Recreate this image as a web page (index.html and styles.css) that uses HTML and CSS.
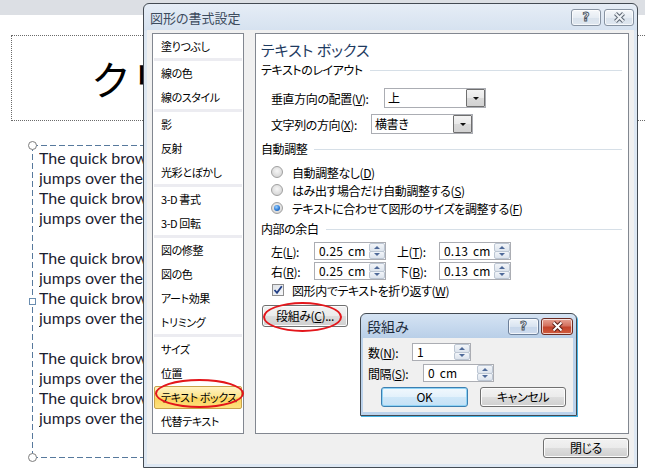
FILE: index.html
```html
<!DOCTYPE html>
<html lang="ja">
<head>
<meta charset="utf-8">
<title>図形の書式設定</title>
<link rel="stylesheet" href="styles.css">
</head>
<body>
<div class="screen">
  <div class="top-band"></div>

  <div class="title-ph"><div class="ph-clip">クリ</div></div>

  <div class="textbox">
    <span class="handle h-tl"></span>
    <span class="handle h-bl"></span>
    <span class="handle-sq"></span>
    <div class="tb-text">
      <p>The quick brown<br>jumps over the<br>The quick brown<br>jumps over the</p>
      <p>The quick brown<br>jumps over the<br>The quick brown<br>jumps over the</p>
      <p>The quick brown<br>jumps over the<br>The quick brown<br>jumps over the</p>
    </div>
  </div>

  <div class="dialog main-dlg">
    <div class="titlebar">
      <span class="title">図形の書式設定</span>
      <span class="cbtn help">?</span>
      <span class="cbtn close">
        <svg width="13" height="11" viewBox="0 0 13 11"><path d="M2.5 1.5 L10.5 9.5 M10.5 1.5 L2.5 9.5" stroke="#5d6773" stroke-width="4"/><path d="M2.5 1.5 L10.5 9.5 M10.5 1.5 L2.5 9.5" stroke="#eef2f6" stroke-width="2"/></svg>
      </span>
    </div>
    <div class="client">
      <div class="main-row">
        <ul class="cat-list">
          <li>塗りつぶし</li>
          <li class="sep"></li>
          <li>線の色</li>
          <li>線のスタイル</li>
          <li class="sep"></li>
          <li>影</li>
          <li>反射</li>
          <li>光彩とぼかし</li>
          <li class="sep"></li>
          <li>3-D 書式</li>
          <li>3-D 回転</li>
          <li class="sep"></li>
          <li>図の修整</li>
          <li>図の色</li>
          <li>アート効果</li>
          <li>トリミング</li>
          <li class="sep"></li>
          <li>サイズ</li>
          <li>位置</li>
          <li class="selected"><span>テキスト ボックス</span></li>
          <li>代替テキスト</li>
        </ul>
        <div class="panel">
          <h2 class="panel-title">テキスト ボックス</h2>
          <div class="section"><span>テキストのレイアウト</span></div>
          <div class="field r-valign">
            <span class="lbl w113">垂直方向の配置(<u>V</u>):</span>
            <div class="combo"><span class="combo-text">上</span><span class="combo-btn"></span></div>
          </div>
          <div class="field r-dir">
            <span class="lbl w100">文字列の方向(<u>X</u>):</span>
            <div class="combo"><span class="combo-text">横書き</span><span class="combo-btn"></span></div>
          </div>
          <div class="section s-auto"><span>自動調整</span></div>
          <div class="radios">
            <div class="opt"><span class="radio"></span>自動調整なし(<u>D</u>)</div>
            <div class="opt"><span class="radio"></span>はみ出す場合だけ自動調整する(<u>S</u>)</div>
            <div class="opt"><span class="radio on"></span>テキストに合わせて図形のサイズを調整する(<u>F</u>)</div>
          </div>
          <div class="section s-margin"><span>内部の余白</span></div>
          <div class="spin-row r-first">
            <span class="lbl w43">左(<u>L</u>):</span>
            <div class="spin w72"><span class="spin-val">0.25 cm</span><span class="spin-btns"><i class="up"></i><i class="dn"></i></span></div>
            <span class="lbl w42 col2">上(<u>T</u>):</span>
            <div class="spin w72"><span class="spin-val">0.13 cm</span><span class="spin-btns"><i class="up"></i><i class="dn"></i></span></div>
          </div>
          <div class="spin-row r-second">
            <span class="lbl w43">右(<u>R</u>):</span>
            <div class="spin w72"><span class="spin-val">0.25 cm</span><span class="spin-btns"><i class="up"></i><i class="dn"></i></span></div>
            <span class="lbl w42 col2">下(<u>B</u>):</span>
            <div class="spin w72"><span class="spin-val">0.13 cm</span><span class="spin-btns"><i class="up"></i><i class="dn"></i></span></div>
          </div>
          <div class="opt check-row">
            <span class="check"><svg width="10" height="10" viewBox="0 0 10 10"><path d="M1.5 5 L4 7.8 L8.8 1.2" fill="none" stroke="#223f86" stroke-width="1.8"/></svg></span>図形内でテキストを折り返す(<u>W</u>)
          </div>
          <button class="btn cols-btn">段組み(<u>C</u>)...</button>
        </div>
      </div>
      <div class="footer">
        <button class="btn close-btn">閉じる</button>
      </div>
    </div>
  </div>

  <div class="dialog sub-dlg">
    <div class="titlebar">
      <span class="title">段組み</span>
      <span class="cbtn help">?</span>
      <span class="cbtn close red">
        <svg width="13" height="11" viewBox="0 0 13 11"><path d="M2.5 1.5 L10.5 9.5 M10.5 1.5 L2.5 9.5" stroke="#5b2019" stroke-width="4"/><path d="M2.5 1.5 L10.5 9.5 M10.5 1.5 L2.5 9.5" stroke="#ffffff" stroke-width="2"/></svg>
      </span>
    </div>
    <div class="client sub-client">
      <div class="spin-row">
        <span class="lbl w44">数(<u>N</u>):</span>
        <div class="spin w59"><span class="spin-val">1</span><span class="spin-btns"><i class="up"></i><i class="dn"></i></span></div>
      </div>
      <div class="spin-row r-gap">
        <span class="lbl w55">間隔(<u>S</u>):</span>
        <div class="spin w71"><span class="spin-val">0 cm</span><span class="spin-btns"><i class="up"></i><i class="dn"></i></span></div>
      </div>
      <div class="btn-row">
        <button class="btn default ok-btn">OK</button>
        <button class="btn cancel-btn">キャンセル</button>
      </div>
    </div>
  </div>

  <div class="ring ring-list"></div>
  <div class="ring ring-btn"></div>
</div>
</body>
</html>
```

FILE: styles.css
```css
* { box-sizing: border-box; margin: 0; padding: 0; }

html, body { width: 645px; height: 475px; overflow: hidden; }

body {
  background: #ffffff;
  font-family: "Noto Sans CJK JP", "Noto Sans", sans-serif;
  font-size: 12px;
  color: #000;
  font-feature-settings: "palt";
  letter-spacing: -0.4px;
}

.screen { position: relative; width: 645px; height: 475px; overflow: hidden; background: #fff; }

.top-band { height: 15px; background: #dcdfe4; }

/* slide shapes */
.title-ph {
  position: absolute; left: 11px; top: 35px; width: 640px; height: 86px;
  border: 1px dotted #6a6a6a;
  display: flex; align-items: center;
  padding-left: 79px;
}
.ph-clip {
  width: 53px; overflow: hidden; white-space: nowrap;
  font-size: 40px; line-height: 1.2; color: #000;
  font-feature-settings: normal; letter-spacing: 0;
}

.textbox {
  position: absolute; left: 32px; top: 145px; width: 300px; height: 313px;
  background:
    repeating-linear-gradient(90deg, #57799d 0 6px, transparent 6px 9px) left top / 100% 1px no-repeat,
    repeating-linear-gradient(90deg, #57799d 0 6px, transparent 6px 9px) left bottom / 100% 1px no-repeat,
    repeating-linear-gradient(180deg, #57799d 0 6px, transparent 6px 9px) left top / 1px 100% no-repeat;
  padding: 3px 0 0 7px;
}
.tb-text {
  width: 104px; overflow: hidden;
  font-family: Lato, "Open Sans", sans-serif;
  font-size: 16px; line-height: 20px; color: #1c2130; white-space: nowrap;
  font-feature-settings: normal; letter-spacing: 0;
}
.tb-text p + p { margin-top: 20px; }
.handle {
  position: absolute; left: -4px; width: 9px; height: 9px; border-radius: 50%;
  border: 1px solid #7d7d7d; background: #fff;
}
.h-tl { top: -4px; }
.h-bl { top: 308px; }
.handle-sq {
  position: absolute; left: -3px; top: 153px; width: 7px; height: 7px;
  border: 1px solid #6a8db0; background: #fff;
}

/* dialogs */
.dialog {
  position: absolute;
  border: 1px solid #434a52;
  border-radius: 6px 6px 0 0;
  display: flex; flex-direction: column;
}
.main-dlg {
  left: 143px; top: 3px; width: 495px; height: 465px;
  background: linear-gradient(#e6edf6, #d6e2f0 26px, #dde7f2 27px);
}
.sub-dlg {
  left: 360px; top: 313px; width: 217px; height: 103px;
  background: linear-gradient(#d5e3f3, #b9cfe8 24px, #bcd3ec 25px);
  box-shadow: 1px 1px 0 #47b5e6;
}

.titlebar { height: 26px; flex: none; display: flex; align-items: center; padding: 0 3px 0 6px; gap: 3px; }
.sub-dlg .titlebar { height: 24px; padding: 0 3px 0 6px; gap: 2px; }
.title { flex: 1; font-size: 13px; line-height: 17px; color: #3d4c5e; letter-spacing: 0; }
.sub-dlg .title { color: #1d2a3a; font-size: 14px; }

.cbtn {
  width: 30px; height: 17px; flex: none;
  border: 1px solid #8793a2; border-radius: 3px;
  background: linear-gradient(#f5f7fa, #e6ecf3 50%, #d9e2ec 51%, #dfe7f0);
  box-shadow: inset 0 0 0 1px rgba(255,255,255,0.7);
  display: flex; align-items: center; justify-content: center;
}
.help {
  font-family: "DejaVu Sans", sans-serif; font-weight: bold; font-size: 12px; line-height: 1;
  color: #f3f5f8; -webkit-text-stroke: 0.9px #4a5562; letter-spacing: 0;
}
.sub-dlg .cbtn { width: 31px; }
.sub-dlg .help { border-color: #6c7f99; background: linear-gradient(#eef3f9, #d9e4f1 50%, #c6d6ea 51%, #cfdcee); }
.close.red {
  width: 32px;
  border-color: #6c2b22;
  background: linear-gradient(#e7a395, #d4715f 45%, #c2432c 55%, #d15c3f);
}

.client {
  flex: 1;
  margin: 0 3px 3px 3px;
  background: #f0f0f0;
  padding: 3px 4px 6px 5px;
  display: flex; flex-direction: column;
}

.main-row { display: flex; gap: 11px; height: 401px; }

.cat-list {
  list-style: none; width: 92px; flex: none;
  border: 1px solid #828790; background: #fff;
  font-size: 11px; letter-spacing: -0.4px;
}
.cat-list li { height: 24px; line-height: 24px; padding-left: 8px; white-space: nowrap; }
.cat-list li.sep { height: 3px; margin: 0 1px; background: #ececf1; }
.cat-list li.selected { padding: 1px 1px 0 1px; }
.cat-list li.selected span {
  display: block; height: 23px; line-height: 21px; padding-left: 6px;
  border: 1px solid #c9a24a; border-radius: 2px;
  background: linear-gradient(#fff3c3, #fde58f 45%, #fcd35f 55%, #fde27e);
}

.panel {
  width: 374px; flex: none;
  border: 1px solid #828790; background: #fff;
  padding: 4px 6px 0 5px;
  display: flex; flex-direction: column;
}
.panel-title {
  font-weight: normal; font-size: 15px; line-height: 24px; height: 24px; color: #1e3a5f; letter-spacing: 0;
}
.section { display: flex; align-items: center; height: 16px; line-height: 16px; gap: 7px; }
.section::after { content: ""; flex: 1; height: 1px; background: #d6dfe7; }
.s-auto { margin-top: 7px; }
.s-margin { margin-top: 4px; }

.field { display: flex; align-items: center; height: 20px; padding-left: 10px; }
.r-valign { margin-top: 10px; }
.r-dir { margin-top: 6px; }
.lbl { flex: none; white-space: nowrap; }
.w113 { width: 113px; }
.w100 { width: 100px; }
.w43 { width: 43px; }
.w42 { width: 42px; }
.w44 { width: 44px; }
.w55 { width: 55px; }
.col2 { margin-left: 11px; }

.combo {
  width: 102px; height: 20px; display: flex;
  border: 1px solid #abadb3; background: #fff;
}
.combo-text { flex: 1; padding-left: 3px; line-height: 18px; }
.combo-btn {
  width: 19px; flex: none;
  border: 1px solid #6f6f6f; border-radius: 1px;
  background: linear-gradient(#f4f4f4, #e9e9e9 50%, #dadada 51%, #d2d2d2);
  display: flex; align-items: center; justify-content: center;
}
.combo-btn::after {
  content: ""; border-left: 3px solid transparent; border-right: 3px solid transparent; border-top: 3px solid #111;
}

.radios { margin-top: 6px; }
.opt { display: flex; align-items: center; height: 18px; padding-left: 10px; white-space: nowrap; }
.radio {
  width: 12px; height: 12px; border-radius: 50%; flex: none; margin-right: 9px;
  border: 1px solid #a0a0a0;
  background: radial-gradient(circle at 50% 40%, #f6f6f6, #d9d9d9 70%, #cfcfcf);
  display: flex; align-items: center; justify-content: center;
}
.radio.on::after {
  content: ""; width: 6px; height: 6px; border-radius: 50%;
  background: radial-gradient(circle at 40% 35%, #9fd4ff, #2c7ad6 55%, #134e9c);
}

.spin-row { display: flex; align-items: center; height: 18px; padding-left: 10px; }
.r-first { margin-top: 5px; }
.r-second { margin-top: 2px; }
.spin {
  height: 18px; display: flex; flex: none;
  border: 1px solid #abadb3; background: #fff;
}
.w72 { width: 72px; }
.w59 { width: 59px; }
.w71 { width: 71px; }
.spin-val { flex: 1; padding-left: 4px; line-height: 16px; white-space: nowrap; letter-spacing: 0.2px; word-spacing: 2px; }
.spin-btns { width: 16px; flex: none; display: flex; flex-direction: column; }
.spin-btns i {
  flex: 1; display: flex; align-items: center; justify-content: center;
  border: 1px solid #bcc6d3; border-radius: 2px;
  background: linear-gradient(#f2f5f9, #dde4ed);
}
.spin-btns i + i { margin-top: -1px; }
.spin-btns .up::after {
  content: ""; border-left: 3px solid transparent; border-right: 3px solid transparent; border-bottom: 3px solid #4f6a99;
}
.spin-btns .dn::after {
  content: ""; border-left: 3px solid transparent; border-right: 3px solid transparent; border-top: 3px solid #4f6a99;
}

.check-row { margin-top: 2px; height: 16px; padding-left: 11px; }
.check {
  width: 12px; height: 12px; flex: none; margin-right: 8px;
  border: 1px solid #8f8f8f;
  background: linear-gradient(135deg, #dfe3e8, #f7f8fa);
  display: flex; align-items: center; justify-content: center;
}

.btn {
  font-family: inherit; font-size: 12px; color: #000; font-feature-settings: "palt"; letter-spacing: -0.4px;
  height: 20px; line-height: 18px;
  border: 1px solid #707070; border-radius: 3px;
  background: linear-gradient(#f2f2f2, #ebebeb 50%, #dddddd 51%, #cfcfcf);
  box-shadow: inset 0 0 0 1px #fcfcfc;
  white-space: nowrap;
}
.cols-btn { width: 86px; height: 22px; margin-top: 7px; margin-left: 1px; }

.footer { display: flex; justify-content: flex-end; margin-top: 4px; }
.close-btn { width: 86px; margin-right: 1px; }

.sub-client { margin: 0 3px 3px 2px; padding: 5px 4px 0 5px; }
.sub-client .spin-row { padding-left: 0; }
.sub-client .r-gap { margin-top: 3px; }
.btn-row { display: flex; gap: 12px; margin-top: 5px; padding-left: 13px; }
.ok-btn { width: 87px; }
.cancel-btn { width: 86px; }
.btn.default {
  border-color: #3c7fb1;
  background: linear-gradient(#f1f8fd, #e3f1fb 50%, #cfe7f8 51%, #c4e1f6);
  box-shadow: inset 0 0 0 1px #8fd3f5;
}

/* red annotation rings */
.ring { position: absolute; border: 2px solid #e3161b; border-radius: 50%; }
.ring-list { left: 155px; top: 379px; width: 89px; height: 29px; }
.ring-btn { left: 263px; top: 302px; width: 79px; height: 30px; }
```
